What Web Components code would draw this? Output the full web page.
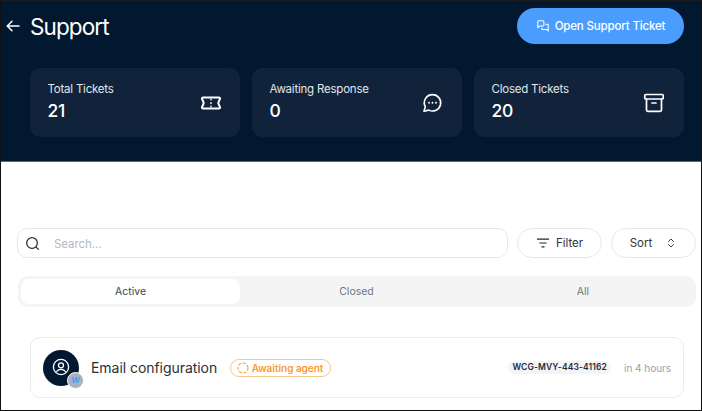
<!DOCTYPE html>
<html lang="en"><head><meta charset="utf-8"><title>Support</title>
<style>
html,body{margin:0;padding:0;background:#fff}
body{font-family:Inter,"Liberation Sans",sans-serif;-webkit-font-smoothing:antialiased}
</style></head><body>
<support-page></support-page>
<script>
const icons={
back:'<svg width="16" height="16" viewBox="0 0 16 16" fill="none" stroke="#fff" stroke-width="1.5" stroke-linecap="round" stroke-linejoin="round"><path d="M14 8H2.5M7 3.2 2.2 8 7 12.8"/></svg>',
chat:'<svg width="14" height="14" viewBox="0 0 16 16" fill="none" stroke="#fff" stroke-width="1.2" stroke-linecap="round" stroke-linejoin="round"><path d="M2 3.200c0-.7.5-1.200 1.200-1.200h4.600c.7 0 1.200.5 1.200 1.200v3.600c0 .7-.5 1.200-1.200 1.200H4.200L2 9.800z"/><path d="M11 6h2c.6 0 1 .4 1 1v6.600L12 12H7.600c-.6 0-1-.4-1-1v-1"/></svg>',
ticket:'<svg width="22" height="22" viewBox="0 0 22 22" fill="none" stroke="#fff" stroke-width="2" stroke-linejoin="round" stroke-linecap="round" style="transform:translateX(1px)"><path d="M3.200 4.500h15.600c.9 0 1.500.7 1.200 1.400L18.600 9c-.5.700-.5 1.300 0 2l1.400 3.100c.3.700-.3 1.400-1.200 1.400H3.200c-.9 0-1.500-.7-1.200-1.400L3.400 11c.5-.7.5-1.300 0-2L2 5.900c-.3-.7.300-1.400 1.200-1.400z" transform="translate(0 1)"/><path d="M11 7.300v.5M11 10.700v.9M11 14.200v.5" stroke-width="1.500"/></svg>',
msg:'<svg width="22" height="22" viewBox="0 0 22 22" fill="none" stroke="#fff" stroke-width="1.600" stroke-linejoin="round" stroke-linecap="round"><path d="M11.500 2.600a8.200 8.200 0 1 1-3.700 15.500L3 19.200l1.300-4.500a8.200 8.200 0 0 1 7.200-12.100z"/><path d="M8 10.800h.01M11.500 10.800h.01M15 10.800h.01" stroke-width="1.900"/></svg>',
archive:'<svg width="22" height="22" viewBox="0 0 22 22" fill="none" stroke="#fff" stroke-width="1.700" stroke-linejoin="round" stroke-linecap="round"><rect x="1.800" y="2.500" width="18.400" height="4.500" rx="1"/><path d="M3.500 7v11c0 .8.500 1.300 1.300 1.300h12.400c.8 0 1.300-.5 1.300-1.300V7"/><path d="M9 11h4"/></svg>',
search:'<svg width="15" height="15" viewBox="0 0 16 16" fill="none" stroke="#1f2937" stroke-width="1.300" stroke-linecap="round"><circle cx="7.500" cy="7.500" r="5.700"/><path d="m11.800 11.800 2.500 2.500"/></svg>',
filter:'<svg width="14" height="14" viewBox="0 0 14 14" fill="none" stroke="#1f2937" stroke-width="1.200" stroke-linecap="round"><path d="M1.500 3.200h11M3.800 7h6.400M5.900 10.800h2.200"/></svg>',
sort:'<svg width="12" height="12" viewBox="0 0 12 12" fill="none" stroke="#374151" stroke-width="1" stroke-linecap="round" stroke-linejoin="round"><path d="M3.500 4.500 6 2l2.500 2.500M3.500 7.500 6 10l2.500-2.500"/></svg>',
user:'<svg width="18" height="18" viewBox="0 0 18 18" fill="none" stroke="#fff" stroke-width="1.300" stroke-linecap="round" style="margin-top:-1px"><circle cx="9" cy="9" r="7.600"/><circle cx="9" cy="7.300" r="2.500"/><path d="M4.700 13.500c1-1.500 2.500-2.100 4.300-2.100s3.300.6 4.300 2.100"/></svg>',
spin:'<svg width="12" height="12" viewBox="0 0 12 12" fill="none" stroke="#fb9a2b" stroke-width="1.100" stroke-linecap="round" stroke-dasharray="2.300 2.300"><circle cx="6" cy="6" r="5"/></svg>'
};
function def(name,css,html){
  customElements.define(name,class extends HTMLElement{
    constructor(){super();const r=this.attachShadow({mode:'open'});
      r.innerHTML='<style>'+css+'</style>'+(typeof html==='function'?html(this):html);}
  });
}
def('stat-card',`:host{display:flex;align-items:center;justify-content:space-between;flex:1;height:69px;box-sizing:border-box;padding:0 19px 0 17.500px;background:#10233a;border-radius:10px;color:#fff}
.l{font-size:11.500px;line-height:16px;color:#e2e6ea;letter-spacing:-.22px;margin-top:-2px}
.v{font-size:17.500px;line-height:22px;font-weight:500;margin-top:3px;letter-spacing:-.2px}
svg{display:block}`,
 el=>`<div><div class="l">${el.getAttribute('label')}</div><div class="v">${el.getAttribute('value')}</div></div>${icons[el.getAttribute('icon')]}`);
def('page-header',`:host{display:block;background:#011830;height:161px;box-sizing:border-box;border-bottom:1px solid #5b6778;padding:7px 17px 0 4px}
.top{display:flex;align-items:center;justify-content:space-between;height:36px}
.t{display:flex;align-items:center;gap:9px;color:#fff;font-size:22.500px;font-weight:400;letter-spacing:-.9px}
svg{display:block}
button{all:unset;display:flex;align-items:center;justify-content:center;gap:5px;width:167px;height:36px;border-radius:18px;background:#4b9dfd;color:#fff;font-size:11.500px;font-weight:500;letter-spacing:-.16px;font-family:Inter,sans-serif}
.cards{display:flex;gap:12px;margin:24px 0 0 25px}`,
`<div class="top"><div class="t">${icons.back}<span>Support</span></div><button>${icons.chat}<span>Open Support Ticket</span></button></div>
<div class="cards"><stat-card label="Total Tickets" value="21" icon="ticket"></stat-card><stat-card label="Awaiting Response" value="0" icon="msg"></stat-card><stat-card label="Closed Tickets" value="20" icon="archive"></stat-card></div>`);
def('pill-button',`:host{display:flex;align-items:center;justify-content:center;gap:var(--g,6px);width:85px;height:30px;box-sizing:border-box;border:1px solid #e6e8ea;border-radius:15px;font-size:11.500px;color:#2b3441;flex:none}
svg{display:block}`,
 el=>{const i=icons[el.getAttribute('icon')];return el.getAttribute('after')!==null?`<slot></slot>${i}`:`${i}<slot></slot>`});
def('search-box',`:host{display:flex;align-items:center;flex:none;width:491px;height:30px;box-sizing:border-box;border:1px solid #e6e8ea;border-radius:10px}
.i{width:28px;display:flex;justify-content:center}
svg{display:block}
.s{flex:1;padding:1px 0 0 8px;box-sizing:border-box;font-size:11.400px;color:#b3b9c4;height:100%;display:flex;align-items:center}`,
`<div class="i">${icons.search}</div><div class="s">Search...</div>`);
def('tab-bar',`:host{display:flex;margin-left:1px;width:678px;height:31px;box-sizing:border-box;padding:3px;background:#f4f4f5;border-radius:10px;font-size:10.500px;color:#6f7680}
div{display:flex;align-items:center;justify-content:center;height:25px;border-radius:8px;flex:none}
.a{background:#fff;color:#3d444e;width:219px}
.c{width:233px}
.e{flex:1}`,
`<div class="a">Active</div><div class="c">Closed</div><div class="e">All</div>`);
def('ticket-row',`:host{display:flex;align-items:center;margin:30px 0 0 29px;width:654px;height:61px;box-sizing:border-box;border:1px solid #e9ebed;border-radius:10px;padding:0 12px 0 12px}
.av{position:relative;width:36px;height:36px;border-radius:50%;background:#011830;display:flex;align-items:center;justify-content:center;flex:none}
.b{position:absolute;right:-5px;bottom:-3px;width:15px;height:15px;border-radius:50%;background:#a9b2bd;border:1px solid #fff;display:flex;align-items:center;justify-content:center;color:#4b9dfd;font-size:8px;font-weight:700;font-style:italic}
.t{font-size:14px;color:#2a2f37;margin-left:12px;white-space:nowrap;letter-spacing:-.05px}
.st{display:flex;align-items:center;gap:3px;height:18px;box-sizing:border-box;margin-left:13px;padding:0 7px 0 5.500px;border:1px solid #fcc78a;border-radius:9px;font-size:10px;font-weight:600;color:#fb9a2b;white-space:nowrap;letter-spacing:-.02px}
.id{margin-left:auto;background:#f3f4f6;border-radius:7px;height:13px;line-height:13px;padding:0 4px;font-size:8.500px;font-weight:600;color:#1f2a3d;letter-spacing:.12px;white-space:nowrap}
.w{margin-left:13px;font-size:10px;color:#9aa1ab;white-space:nowrap;letter-spacing:-.03px}
svg{display:block}`,
`<div class="av">${icons.user}<div class="b">W</div></div><div class="t">Email configuration</div><div class="st">${icons.spin}<span>Awaiting agent</span></div><div class="id">WCG-MVY-443-41162</div><div class="w">in 4 hours</div>`);
def('support-page',`:host{display:block;width:702px;height:411px;box-sizing:border-box;border:1px solid #111;border-top-color:#1a1a1a;overflow:hidden;background:#fff}
.tools{display:flex;gap:9px;margin:66px 0 0 16px}
.tabs{margin:18px 0 0 16px}`,
`<page-header></page-header>
<div class="tools"><search-box></search-box><pill-button icon="filter">Filter</pill-button><pill-button icon="sort" after style="--g:13px">Sort</pill-button></div>
<div class="tabs"><tab-bar></tab-bar></div>
<ticket-row></ticket-row>`);
</script>
</body></html>
